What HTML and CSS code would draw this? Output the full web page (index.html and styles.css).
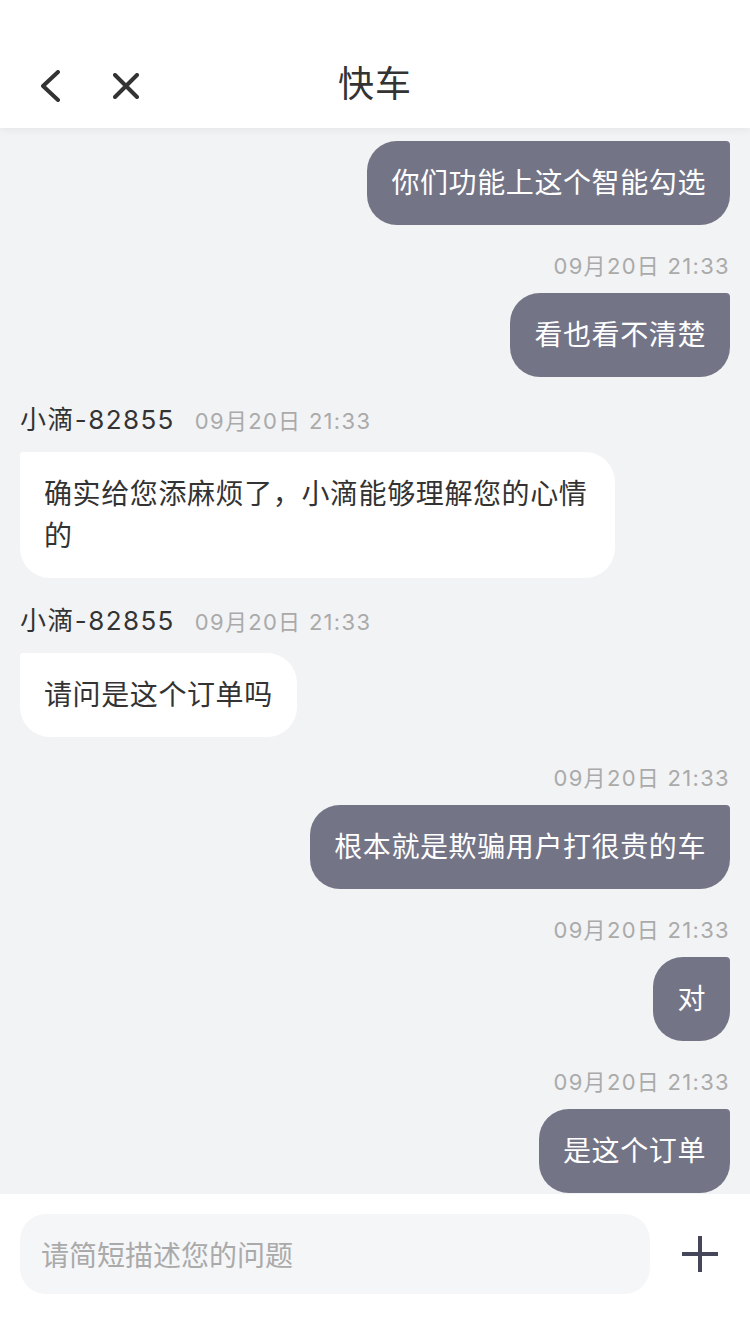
FILE: index.html
```html
<!DOCTYPE html>
<html lang="zh-CN">
<head>
    <meta charset="UTF-8">
    <meta name="viewport" content="width=device-width, initial-scale=1.0">
    <title>快车</title>
    <link rel="stylesheet" href="styles.css">
</head>
<body>
    <div class="page">
        <header class="nav-bar">
            <div class="nav-left">
                <span class="nav-icon">
                    <svg width="19" height="32" viewBox="0 0 19 32">
                        <path d="M17 2 L2 16 L17 30" fill="none" stroke="#333" stroke-width="4" stroke-linecap="round" stroke-linejoin="round"/>
                    </svg>
                </span>
                <span class="nav-icon">
                    <svg width="26" height="26" viewBox="0 0 26 26">
                        <path d="M2 2 L24 24 M24 2 L2 24" fill="none" stroke="#333" stroke-width="4" stroke-linecap="round"/>
                    </svg>
                </span>
            </div>
            <h1 class="nav-title">快车</h1>
        </header>

        <main class="chat">
            <div class="msg self">
                <div class="bubble">你们功能上这个智能勾选</div>
            </div>

            <div class="msg self">
                <div class="meta"><span class="time">09月20日 21:33</span></div>
                <div class="bubble">看也看不清楚</div>
            </div>

            <div class="msg agent">
                <div class="meta"><span class="name">小滴-82855</span><span class="time">09月20日 21:33</span></div>
                <div class="bubble">确实给您添麻烦了，小滴能够理解您的心情的</div>
            </div>

            <div class="msg agent">
                <div class="meta"><span class="name">小滴-82855</span><span class="time">09月20日 21:33</span></div>
                <div class="bubble">请问是这个订单吗</div>
            </div>

            <div class="msg self">
                <div class="meta"><span class="time">09月20日 21:33</span></div>
                <div class="bubble">根本就是欺骗用户打很贵的车</div>
            </div>

            <div class="msg self">
                <div class="meta"><span class="time">09月20日 21:33</span></div>
                <div class="bubble">对</div>
            </div>

            <div class="msg self">
                <div class="meta"><span class="time">09月20日 21:33</span></div>
                <div class="bubble">是这个订单</div>
            </div>
        </main>

        <footer class="input-bar">
            <div class="input-box">请简短描述您的问题</div>
            <span class="plus">
                <svg width="38" height="38" viewBox="0 0 38 38">
                    <path d="M19 1 V37 M1 19 H37" fill="none" stroke="#46465a" stroke-width="4"/>
                </svg>
            </span>
        </footer>
    </div>
</body>
</html>
```

FILE: styles.css
```css
* {
    margin: 0;
    padding: 0;
    box-sizing: border-box;
}

body {
    font-family: Inter, "Noto Sans CJK SC", sans-serif;
    background-color: #f2f3f5;
    color: #333;
    width: 750px;
    height: 1334px;
    overflow: hidden;
}

.page {
    display: flex;
    flex-direction: column;
    height: 1334px;
}

/* top bar */
.nav-bar {
    position: relative;
    height: 128px;
    flex: none;
    background-color: #fff;
    display: flex;
    align-items: flex-end;
    justify-content: center;
    padding-bottom: 24px;
    box-shadow: 0 2px 8px rgba(0, 0, 0, 0.06);
    z-index: 2;
}

.nav-left {
    position: absolute;
    left: 41px;
    top: 70px;
    height: 32px;
    display: flex;
    align-items: center;
    gap: 53px;
}

.nav-icon {
    display: flex;
}

.nav-title {
    font-size: 36px;
    font-weight: normal;
    line-height: 40px;
    color: #333;
    letter-spacing: 1px;
}

/* chat list */
.chat {
    flex: 1;
    overflow: hidden;
    padding: 13px 20px 0;
    display: flex;
    flex-direction: column;
}

.msg {
    display: flex;
    flex-direction: column;
    margin-bottom: 26px;
}

.msg.self {
    align-items: flex-end;
}

.msg.agent {
    align-items: flex-start;
}

.meta {
    display: flex;
    align-items: baseline;
    gap: 20px;
    margin-bottom: 12px;
    line-height: 30px;
}

.agent .meta {
    line-height: 34px;
    margin-bottom: 14px;
}

.name {
    font-size: 26px;
    color: #333;
    letter-spacing: 1.4px;
}

.time {
    font-size: 22px;
    color: #aaa;
    letter-spacing: 1.3px;
}

.bubble {
    font-size: 28px;
    line-height: 42px;
    letter-spacing: 0.6px;
    padding: 21px 24px;
    max-width: 595px;
}

.self .bubble {
    background-color: #747487;
    color: #fff;
    border-radius: 30px 4px 30px 30px;
}

.agent .bubble {
    background-color: #fff;
    color: #333;
    border-radius: 3px 30px 30px 30px;
}

/* bottom input */
.input-bar {
    flex: none;
    height: 140px;
    background-color: #fff;
    display: flex;
    align-items: flex-start;
    padding: 20px 20px 0;
    gap: 31px;
}

.input-box {
    width: 630px;
    height: 80px;
    background-color: #f5f6f8;
    border-radius: 26px;
    padding: 0 21px;
    display: flex;
    align-items: center;
    font-size: 28px;
    color: #aaa;
}

.plus {
    display: flex;
    margin-top: 21px;
}
```
